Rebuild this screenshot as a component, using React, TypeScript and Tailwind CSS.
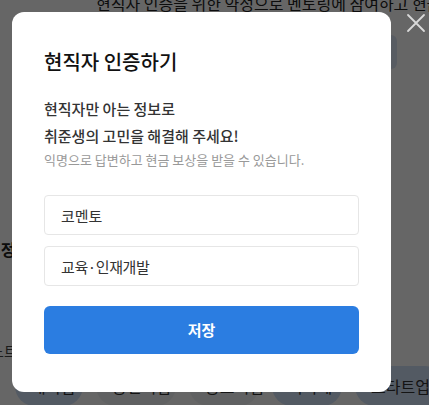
import React from 'react';

const font = { fontFamily: '"Noto Sans CJK KR", "Noto Sans", sans-serif' };

export default function App() {
  const chips = [
    { label: '대기업', w: 'w-[68px]', bg: 'bg-[#cfe0f7]' },
    { label: '중견기업', w: 'w-[80px]', bg: 'bg-[#f1f3f5]' },
    { label: '중소기업', w: 'w-[70px]', bg: 'bg-[#f1f3f5]' },
    { label: '외국계', w: 'w-[70px]', bg: 'bg-[#cfe0f7]' },
    { label: '스타트업', w: 'w-[90px]', bg: 'bg-[#cfe0f7]' },
  ];

  return (
    <div className="relative w-[429px] h-[405px] overflow-hidden bg-white" style={font}>
      {/* page behind the dialog */}
      <div className="flex flex-col h-full">
        <p className="pl-[96px] -mt-[9px] text-[16px] text-[#222] whitespace-nowrap">
          현직자 인증을 위한 약정으로 멘토링에 참여하고 현금 보상을
        </p>
        <div className="flex justify-end mt-[20px] pr-[32px]">
          <div className="w-[40px] h-[34px] rounded-[6px] bg-[#dde6f5]" />
        </div>
        <p className="mt-[168px] -ml-[14px] text-[16px] font-bold text-[#222]">인정</p>
        <p className="mt-[80px] -ml-[9px] text-[14px] text-[#444]">노트</p>
        <div className="flex gap-[13px] mt-auto -mb-[1px] pl-[15px] whitespace-nowrap">
          {chips.map((c) => (
            <div
              key={c.label}
              className={`${c.w} ${c.bg} shrink-0 h-[40px] pl-[16px] rounded-full flex items-center text-[16px] text-[#333]`}
            >
              {c.label}
            </div>
          ))}
        </div>
      </div>

      {/* overlay */}
      <div className="absolute inset-0 bg-black/60" />

      {/* close */}
      <button className="absolute left-[405px] top-[12px] w-[22px] h-[22px] flex items-center justify-center">
        <svg width="20" height="20" viewBox="0 0 20 20" fill="none" stroke="#d9d9d9" strokeWidth="1.8" strokeLinecap="round">
          <path d="M2 2L18 18M18 2L2 18" />
        </svg>
      </button>

      {/* dialog */}
      <div className="absolute left-[12px] top-[12px] w-[379px] h-[380px] bg-white rounded-[12px] px-[32px] pt-[35px]">
        <h2 className="text-[20px] leading-[30px] font-medium text-[#111]">현직자 인증하기</h2>
        <p className="mt-[18px] text-[15px] leading-[27px] font-medium text-[#333]">
          현직자만 아는 정보로
          <br />
          취준생의 고민을 해결해 주세요!
        </p>
        <p className="mt-[1px] text-[13px] leading-[20px] text-[#999]">
          익명으로 답변하고 현금 보상을 받을 수 있습니다.
        </p>

        <div className="mt-[25px] flex flex-col gap-[11px]">
          <input
            defaultValue="코멘토"
            className="w-full h-[40px] px-[16px] rounded-[4px] border border-[#e6e6e6] text-[15px] text-[#333] outline-none"
            style={font}
          />
          <input
            defaultValue="교육·인재개발"
            className="w-full h-[40px] px-[16px] rounded-[4px] border border-[#e6e6e6] text-[15px] text-[#333] outline-none tracking-[-0.4px]"
            style={font}
          />
        </div>

        <button className="mt-[20px] w-full h-[48px] rounded-[6px] bg-[#2b7de1] text-white text-[15px] font-bold">
          저장
        </button>
      </div>
    </div>
  );
}
